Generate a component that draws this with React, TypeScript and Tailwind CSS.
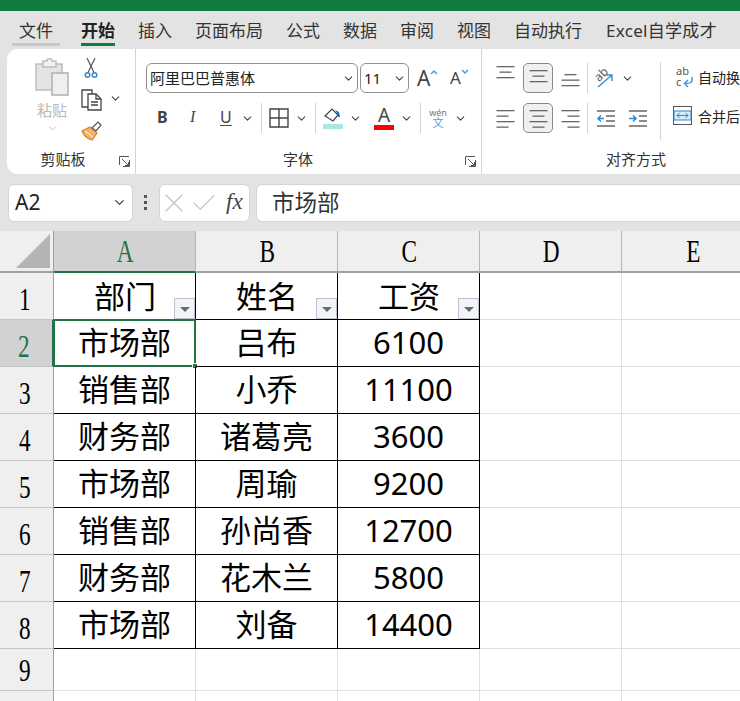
import { Check, ChevronDown, X } from 'lucide-react';

const cjk = { fontFamily: '"Noto Sans","Noto Sans CJK SC",sans-serif' };

const tabs = ['插入', '页面布局', '公式', '数据', '审阅', '视图', '自动执行'];

const rows = [
  ['部门', '姓名', '工资'],
  ['市场部', '吕布', '6100'],
  ['销售部', '小乔', '11100'],
  ['财务部', '诸葛亮', '3600'],
  ['市场部', '周瑜', '9200'],
  ['销售部', '孙尚香', '12700'],
  ['财务部', '花木兰', '5800'],
  ['市场部', '刘备', '14400'],
];

function Chevron({ className = '' }: { className?: string }) {
  return <ChevronDown size={13} strokeWidth={2} className={`shrink-0 text-[#444] ${className}`} />;
}

function Launcher() {
  return (
    <svg width="11" height="11" viewBox="0 0 11 11" fill="none" stroke="#555" strokeWidth="1" className="absolute right-[5px] bottom-[7px]">
      <path d="M.5 9V.5H10M10.500 4v6.500H4M3 3l6.500 6.500M9.500 6v3.500H6" />
    </svg>
  );
}

function Lines({ widths, align, gap = 5.5 }: { widths: number[]; align: 'start' | 'center' | 'end'; gap?: number }) {
  return (
    <svg width="19" height="19" viewBox="0 0 19 19">
      {widths.map((w, i) => {
        const x = align === 'start' ? 0.5 : align === 'center' ? (18 - w) / 2 + 0.5 : 18.5 - w;
        return <rect key={i} x={x} y={i * gap + 1} width={w} height="1.3" fill="#666" />;
      })}
    </svg>
  );
}

function AlignBox({ children, active = false }: { children: React.ReactNode; active?: boolean }) {
  return (
    <div className={`flex h-[30px] w-[30px] items-center justify-center rounded-[5px] border ${active ? 'border-[#8a8a8a] bg-[#f0f0f0]' : 'border-transparent'}`}>
      {children}
    </div>
  );
}

function Sep({ className = '' }: { className?: string }) {
  return <div className={`w-px bg-[#d4d4d4] ${className}`} />;
}

function ClipboardGroup() {
  return (
    <div className="relative flex h-full w-[129px] shrink-0 flex-col border-r border-[#d4d4d4]" style={cjk}>
      <div className="flex h-[100px] pt-[9px]">
        <div className="ml-[26px] flex w-[38px] flex-col items-center">
          <svg width="36" height="38" viewBox="0 0 36 38" fill="none">
            <path d="M2 6h26v26H2z" fill="#e4e4e4" stroke="#bdbdbd" strokeWidth="1.500" />
            <path d="M9 3h4a2.500 2.500 0 0 1 5 0h4v6H9z" fill="#f2f2f2" stroke="#bdbdbd" strokeWidth="1.500" />
            <path d="M18 15h16v22H18z" fill="#efefef" stroke="#b0b0b0" strokeWidth="1.500" />
          </svg>
          <span className="mt-[3px] text-[15px] leading-[22px] text-[#b9b9b9]">粘贴</span>
          <ChevronDown size={11} className="mt-[2px] text-[#b9b9b9]" />
        </div>
        <div className="ml-[10px] flex flex-col">
          <svg width="20" height="22" viewBox="0 0 20 22" fill="none">
            <path d="M6 0l7 14.500M14 0L7 14.500" stroke="#555" strokeWidth="1.200" />
            <circle cx="6.500" cy="17" r="2.300" stroke="#3a86c8" strokeWidth="1.500" />
            <circle cx="13.500" cy="17" r="2.300" stroke="#3a86c8" strokeWidth="1.500" />
          </svg>
          <div className="mt-[9px] flex items-center">
            <svg width="21" height="22" viewBox="0 0 21 22" fill="none" stroke="#444" strokeWidth="1.300">
              <path d="M7 18H1V1h10v4" />
              <path d="M7 5h8l5 5v11H7z" fill="#fff" />
              <path d="M15 5v5h5M10 13h7M10 16h7" />
            </svg>
            <Chevron className="ml-[7px] mt-[-3px]" />
          </div>
          <svg width="21" height="20" viewBox="0 0 21 20" fill="none" className="mt-[10px]">
            <path d="M1 10l8-4 7 6-5 7C7 18 3 15 1 10z" fill="#f4b26d" stroke="#e07f1f" strokeWidth="1.200" />
            <path d="M4 10l8 6" stroke="#fff" strokeWidth="1" />
            <path d="M11 7l6-6 3 3-5 6z" fill="#fff" stroke="#555" strokeWidth="1.200" />
          </svg>
        </div>
      </div>
      <div className="pr-[16px] text-center text-[15px] leading-[20px] text-[#333]">剪贴板</div>
      <Launcher />
    </div>
  );
}

function FontGroup() {
  return (
    <div className="relative flex h-full w-[346px] shrink-0 flex-col border-r border-[#d4d4d4]" style={cjk}>
      <div className="h-[100px] pl-[10px] pt-[14px]">
        <div className="flex items-center">
          <div className="flex h-[30px] w-[212px] items-center justify-between rounded-[6px] border border-[#8f8f8f] pl-[3px] pr-[2px]">
            <span className="text-[15px] text-[#222]">阿里巴巴普惠体</span>
            <Chevron />
          </div>
          <div className="ml-[2px] flex h-[30px] w-[49px] items-center justify-between rounded-[6px] border border-[#8f8f8f] pl-[3px] pr-[2px]">
            <span className="text-[15px] text-[#222]">11</span>
            <Chevron />
          </div>
          <div className="ml-[8px] flex w-[22px] items-start">
            <span className="text-[21px] leading-[24px] text-[#444]">A</span>
            <svg width="8" height="6" viewBox="0 0 8 6" fill="none" stroke="#4a9edb" strokeWidth="1.500" className="mt-[3px] shrink-0"><path d="M1 5l3-3 3 3" /></svg>
          </div>
          <div className="ml-[11px] flex w-[20px] items-start">
            <span className="text-[17px] leading-[24px] text-[#444]">A</span>
            <svg width="8" height="6" viewBox="0 0 8 6" fill="none" stroke="#4a9edb" strokeWidth="1.500" className="mt-[3px] shrink-0"><path d="M1 1l3 3 3-3" /></svg>
          </div>
        </div>
        <div className="mt-[10px] flex h-[30px] items-center">
          <span className="ml-[11px] mt-[-2px] w-[33px] text-[16px] font-bold text-[#444]">B</span>
          <span className="mt-[-2px] w-[30px] text-[16px] italic text-[#444]" style={{ fontFamily: '"Liberation Serif",serif' }}>I</span>
          <span className="mt-[-2px] w-[20px] text-[16px] text-[#444] underline underline-offset-2">U</span>
          <Chevron className="ml-[1px]" />
          <Sep className="ml-[7px] h-[30px]" />
          <svg width="20" height="20" viewBox="0 0 20 20" fill="none" stroke="#444" strokeWidth="1.400" className="ml-[7px] shrink-0">
            <path d="M1 1h18v18H1zM10 1v18M1 10h18" />
          </svg>
          <Chevron className="ml-[6px]" />
          <Sep className="ml-[7px] h-[30px]" />
          <div className="ml-[7px] flex w-[20px] flex-col items-center">
            <svg width="18" height="15" viewBox="0 0 18 15" fill="none">
              <path d="M1 8l7-7 6 6-5 6z" stroke="#444" strokeWidth="1.200" />
              <path d="M11 2l4 2 1 5-2 0-1-4z" fill="#1f6fb0" />
            </svg>
            <div className="mt-[1px] h-[5px] w-[20px] bg-[#a8e8e0]" />
          </div>
          <Chevron className="ml-[6px]" />
          <div className="ml-[12px] flex w-[20px] flex-col items-center">
            <span className="text-[19px] leading-[17px] text-[#444]">A</span>
            <div className="mt-[1px] h-[5px] w-[20px] bg-[#ff0000]" />
          </div>
          <Chevron className="ml-[6px]" />
          <Sep className="ml-[7px] h-[30px]" />
          <div className="ml-[8px] flex w-[18px] flex-col items-center leading-none">
            <span className="text-[9px] text-[#777]">wén</span>
            <span className="text-[11px] text-[#4a9edb]">文</span>
          </div>
          <Chevron className="ml-[7px]" />
        </div>
      </div>
      <div className="pr-[21px] text-center text-[15px] leading-[20px] text-[#333]">字体</div>
      <Launcher />
    </div>
  );
}

function AlignGroup() {
  return (
    <div className="flex h-full w-[308px] shrink-0 flex-col" style={cjk}>
      <div className="flex h-[100px]">
        <div className="w-[178px] shrink-0 pl-[14px] pt-[14px]">
          <div className="flex h-[30px] items-center">
            <div className="mt-[-8px] flex w-[27px] justify-start"><Lines widths={[18, 12, 18]} align="center" /></div>
            <AlignBox active><Lines widths={[18, 12, 18]} align="center" /></AlignBox>
            <div className="ml-[8px] mt-[8px] w-[19px]"><Lines widths={[12, 18, 18]} align="center" /></div>
            <Sep className="ml-[7px] h-[30px]" />
            <svg width="22" height="22" viewBox="0 0 22 22" fill="none" className="ml-[7px] shrink-0">
              <path d="M3 20L17 8M11 8h6v6" stroke="#3a96d8" strokeWidth="1.500" />
              <text x="0" y="12" fontSize="12" fill="#555" transform="rotate(-45 6 9)">ab</text>
            </svg>
            <Chevron className="ml-[4px]" />
          </div>
          <div className="mt-[10px] flex h-[30px] items-center">
            <div className="flex w-[27px]"><Lines widths={[18, 12, 18, 12]} align="start" /></div>
            <AlignBox active><Lines widths={[18, 12, 18, 12]} align="center" /></AlignBox>
            <div className="ml-[8px] w-[19px]"><Lines widths={[18, 12, 18, 12]} align="end" /></div>
            <Sep className="ml-[7px] h-[30px]" />
            <svg width="20" height="19" viewBox="0 0 20 19" fill="none" className="ml-[8px] shrink-0">
              <path d="M1 2h18M10 7h9M10 12h9M1 17h18" stroke="#666" strokeWidth="1.300" />
              <path d="M8 9.500H2M5 6.500l-3 3 3 3" stroke="#2e86cc" strokeWidth="1.500" />
            </svg>
            <svg width="20" height="19" viewBox="0 0 20 19" fill="none" className="ml-[12px] shrink-0">
              <path d="M1 2h18M11 7h8M11 12h8M1 17h18" stroke="#666" strokeWidth="1.300" />
              <path d="M1 9.500h7M5 6.500l3 3-3 3" stroke="#2e86cc" strokeWidth="1.500" />
            </svg>
          </div>
        </div>
        <WrapColumn />
      </div>
      <div className="text-center text-[15px] leading-[20px] text-[#333]">对齐方式</div>
    </div>
  );
}

function WrapColumn() {
  return (
    <div className="mt-[13px] flex h-[78px] flex-1 flex-col border-l border-[#d4d4d4] pl-[12px] pt-[3px]">
      <div className="flex h-[24px] items-center whitespace-nowrap">
        <svg width="20" height="22" viewBox="0 0 20 22" fill="none" className="ml-[3px] shrink-0">
          <text x="0" y="9" fontSize="11" fill="#555">ab</text>
          <text x="0" y="20" fontSize="11" fill="#555">c</text>
          <path d="M16 11c1 6-2 6.500-7 6.500M12 14l-3.500 3.500L12 21" stroke="#3a96d8" strokeWidth="1.400" />
        </svg>
        <span className="ml-[2px] text-[14px] text-[#222]">自动换行</span>
      </div>
      <div className="mt-[15px] flex h-[24px] items-center whitespace-nowrap">
        <svg width="20" height="20" viewBox="0 0 20 20" fill="none" className="shrink-0">
          <rect x="0.500" y="0.500" width="18" height="18" fill="#fff" stroke="#555" />
          <rect x="1" y="5" width="17" height="9" fill="#d9ecf9" stroke="#2e86cc" />
          <path d="M4 9.500h11M6.500 7L4 9.500 6.500 12M12.500 7L15 9.500 12.500 12" stroke="#2e86cc" />
        </svg>
        <span className="ml-[5px] text-[14px] text-[#222]">合并后居中</span>
      </div>
    </div>
  );
}

function FormulaBar() {
  return (
    <div className="flex h-[57px] items-center bg-[#e3e3e3] pl-[8px]" style={cjk}>
      <div className="flex h-[38px] w-[125px] items-center justify-between rounded-[6px] border border-[#d4d4d4] bg-white pl-[6px] pr-[5px]">
        <span className="text-[21px] text-[#222]">A2</span>
        <ChevronDown size={15} className="text-[#444]" />
      </div>
      <div className="ml-[11px] flex w-[5px] flex-col gap-[3px]">
        <div className="h-[3px] w-[3px] bg-[#555]" />
        <div className="h-[3px] w-[3px] bg-[#555]" />
        <div className="h-[3px] w-[3px] bg-[#555]" />
      </div>
      <div className="ml-[10px] flex h-[38px] w-[91px] items-center rounded-[6px] border border-[#d4d4d4] bg-white">
        <X size={32} strokeWidth={1} className="ml-[-2px] shrink-0 text-[#c8c8c8]" />
        <Check size={30} strokeWidth={1} className="ml-[-1px] shrink-0 text-[#c8c8c8]" />
        <span className="ml-[7px] text-[23px] italic text-[#444]" style={{ fontFamily: '"Liberation Serif",serif' }}>fx</span>
      </div>
      <div className="ml-[6px] flex h-[38px] flex-1 items-center rounded-l-[6px] border border-r-0 border-[#d4d4d4] bg-white pl-[15px]">
        <span className="text-[22.500px] text-[#333]">市场部</span>
      </div>
    </div>
  );
}

function HeaderLabel({ text, active = false }: { text: string; active?: boolean }) {
  return (
    <span
      className={`inline-block scale-x-75 text-[31px] leading-none ${active ? 'text-[#217346]' : 'text-black'}`}
      style={{ fontFamily: '"Liberation Serif",serif' }}
    >
      {text}
    </span>
  );
}

function FilterButton() {
  return (
    <div className="absolute right-0 bottom-0 flex h-[21px] w-[21px] items-center justify-center border border-[#bcc3cf] bg-[#f3f4f6]">
      <div className="mt-[2px] h-0 w-0 border-x-[5px] border-t-[5px] border-x-transparent border-t-[#6b6b6b]" />
    </div>
  );
}

function Sheet() {
  const colHead = 'flex h-[42px] items-center justify-center border-r border-b-2 border-r-[#b4b4b4] border-b-[#a0a0a0] bg-[#efefef] pl-[2px]';
  const rowHead = 'flex items-center justify-center border-r border-b border-r-[#a0a0a0] border-b-[#c4c4c4] bg-[#efefef] pr-[4px] pt-[7px]';
  const blank = 'border-r border-b border-[#e0e0e0]';
  const dataCell = 'relative flex items-center justify-center border-r border-b border-black text-[31px] text-black';

  return (
    <div className="grid flex-1 grid-cols-[54px_142px_142px_142px_142px_142px] grid-rows-[42px_repeat(8,47px)_42px_1fr] overflow-hidden bg-white" style={cjk}>
      <div className="flex h-[42px] items-end justify-end border-r border-b-2 border-r-[#a0a0a0] border-b-[#a0a0a0] bg-[#efefef] pb-[3px] pr-[3px]">
        <div className="h-0 w-0 border-b-[34px] border-l-[34px] border-b-[#b4b4b4] border-l-transparent" />
      </div>
      <div className="flex h-[42px] items-center justify-center border-r border-b-2 border-r-[#b4b4b4] border-b-[#217346] bg-[#d2d2d2] pl-[2px]">
        <HeaderLabel text="A" active />
      </div>
      {['B', 'C', 'D', 'E'].map((c) => (
        <div key={c} className={colHead}><HeaderLabel text={c} /></div>
      ))}

      {rows.map((row, i) => (
        <div key={i} className="contents">
          <div className={i === 1 ? 'flex items-center justify-center border-r-2 border-b border-r-[#217346] border-b-[#c4c4c4] bg-[#d2d2d2] pr-[4px] pt-[7px]' : rowHead}>
            <HeaderLabel text={String(i + 1)} active={i === 1} />
          </div>
          {row.map((v, j) => (
            <div key={j} className={`${dataCell} ${i === 0 ? 'pl-[1px]' : 'pb-[2px]'}`}>
              {v}
              {i === 0 && <FilterButton />}
              {i === 1 && j === 0 && (
                <div className="absolute top-[-1px] left-[-1px] h-[48px] w-[143px] border-2 border-[#217346]">
                  <div className="absolute right-[-4px] bottom-[-4px] h-[6px] w-[6px] border border-white bg-[#217346]" />
                </div>
              )}
            </div>
          ))}
          <div className={blank} />
          <div className={blank} />
        </div>
      ))}

      <div className="flex items-center justify-center border-r border-b border-r-[#a0a0a0] border-b-[#c4c4c4] bg-[#efefef] pr-[4px] pt-[2px]"><HeaderLabel text="9" /></div>
      {[0, 1, 2, 3, 4].map((k) => <div key={k} className={blank} />)}
      <div className="border-r border-r-[#a0a0a0] bg-[#efefef]" />
      {[0, 1, 2, 3, 4].map((k) => <div key={k} className="border-r border-[#e0e0e0]" />)}
    </div>
  );
}

export default function App() {
  return (
    <div className="flex h-[701px] w-[740px] flex-col overflow-hidden bg-[#e3e3e3]">
      <div className="h-[11px] bg-[#107c41]" />
      <div className="flex h-[38px] items-start whitespace-nowrap pl-[12px] pt-[9px] text-[17px] leading-[22px] text-[#333]" style={cjk}>
        <div className="mr-[21px] border-b-[3px] border-[#c8c8c8] px-[7px] pb-[1px]">文件</div>
        <div className="mr-[23px] border-b-[3px] border-[#107c41] pb-[1px] font-bold text-[#222]">开始</div>
        <div className="flex gap-[23px]">
          {tabs.map((t) => <span key={t}>{t}</span>)}
          <span className="ml-[1px] tracking-[0.3px]">Excel自学成才</span>
        </div>
      </div>
      <div className="ml-[7px] flex h-[125px] overflow-hidden rounded-l-[10px] bg-white">
        <ClipboardGroup />
        <FontGroup />
        <AlignGroup />
      </div>
      <FormulaBar />
      <Sheet />
    </div>
  );
}
